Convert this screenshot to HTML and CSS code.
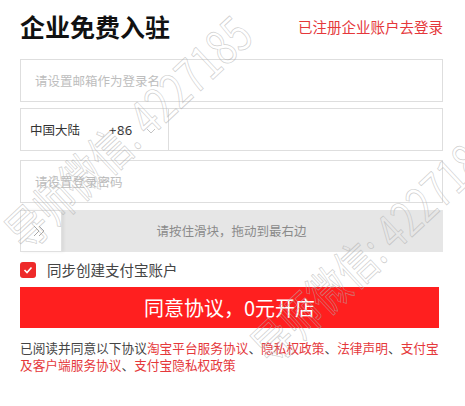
FILE: index.html
```html
<!DOCTYPE html>
<html lang="zh-CN">
<head>
<meta charset="utf-8">
<link rel="stylesheet" href="styles.css">
</head>
<body>
<div class="page">
  <header class="head">
    <h1 class="title">企业免费入驻</h1>
    <a class="login">已注册企业账户去登录</a>
  </header>

  <div class="field field-email"><span class="ph">请设置邮箱作为登录名</span></div>

  <div class="field field-phone">
    <div class="region">
      <span class="country">中国大陆</span>
      <span class="code">+86</span>
      <svg class="chev" width="10" height="6" viewBox="0 0 10 6"><path d="M1 1 L5 5 L9 1" fill="none" stroke="#c4c4c4" stroke-width="1"/></svg>
    </div>
    <div class="phone-input"></div>
  </div>

  <div class="field field-pwd"><span class="ph">请设置登录密码</span></div>

  <div class="slider">
    <span class="slider-text">请按住滑块，拖动到最右边</span>
    <div class="handle">
      <svg width="14" height="12" viewBox="0 0 14 12"><path d="M2 1 L7 6 L2 11 M7 1 L12 6 L7 11" fill="none" stroke="#a8a8a8" stroke-width="1"/></svg>
    </div>
  </div>

  <label class="agree">
    <span class="check"><svg width="10" height="8" viewBox="0 0 10 8"><path d="M1.5 4 L4 6.5 L8.5 1.5" fill="none" stroke="#fff" stroke-width="1.6"/></svg></span>
    <span class="agree-text">同步创建支付宝账户</span>
  </label>

  <button class="submit">同意协议，0元开店</button>

  <p class="terms">已阅读并同意以下协议<a class="link">淘宝平台服务协议</a>、<a class="link">隐私权政策</a>、<a class="link">法律声明</a>、<a class="link">支付宝及客户端服务协议</a>、<a class="link">支付宝隐私权政策</a></p>

  <div class="watermark">
    <span class="wm wm-1">导师微信: 4227185</span>
    <span class="wm wm-2">导师微信: 4227185</span>
  </div>
</div>
</body>
</html>
```

FILE: styles.css
```css
* { box-sizing: border-box; }
html, body { margin: 0; padding: 0; background: #fff; }
body {
  width: 465px;
  height: 406px;
  overflow: hidden;
  font-family: "Noto Sans CJK SC", "Noto Sans", "Liberation Sans", sans-serif;
  color: #333;
}
.page {
  position: relative;
  padding: 0 22px 0 20px;
  height: 406px;
  overflow: hidden;
}
.head {
  height: 52px;
  display: flex;
  align-items: center;
  justify-content: space-between;
  margin-bottom: 7px;
}
.title {
  margin: 0;
  font-size: 25px;
  font-weight: 700;
  line-height: 30px;
  color: #111;
}
.login {
  font-size: 14.5px;
  line-height: 20px;
  color: #e5383b;
  padding-top: 2px;
}
.field {
  height: 43px;
  border: 1px solid #dedede;
  display: flex;
  align-items: center;
}
.ph {
  padding-left: 14px;
  font-size: 12.5px;
  color: #bdbdbd;
  line-height: 16px;
}
.field-phone { margin-top: 6px; }
.region {
  width: 148px;
  height: 100%;
  border-right: 1px solid #dedede;
  display: flex;
  align-items: center;
  padding-left: 9px;
  font-size: 12.5px;
  color: #333;
}
.country { width: 79px; }
.code { font-family: "Noto Sans", "Liberation Sans", sans-serif; font-size: 13px; letter-spacing: 0.5px; }
.chev { margin-left: 13px; margin-top: 2px; }
.phone-input { flex: 1; }
.field-pwd { margin-top: 9px; }
.slider {
  margin-top: 7px;
  height: 42px;
  background: #e6e6e6;
  display: grid;
}
.slider > * { grid-area: 1 / 1; }
.slider-text {
  justify-self: center;
  align-self: center;
  font-size: 12.5px;
  color: #8a8a8a;
  line-height: 16px;
}
.handle {
  justify-self: start;
  width: 42px;
  height: 42px;
  background: #fff;
  border: 1px solid #e0e0e0;
  box-shadow: 2px 0 3px rgba(0,0,0,0.06);
  display: flex;
  align-items: center;
  justify-content: center;
  padding-right: 4px;
}
.agree {
  display: flex;
  align-items: center;
  height: 24px;
  margin-top: 6px;
}
.check {
  width: 16px;
  height: 16px;
  border-radius: 3px;
  background: #ee2a2a;
  display: flex;
  align-items: center;
  justify-content: center;
}
.agree-text {
  margin-left: 11px;
  font-size: 14.5px;
  color: #444;
  line-height: 18px;
}
.submit {
  display: flex;
  align-items: center;
  justify-content: center;
  margin-top: 5px;
  width: 419px;
  height: 41px;
  border: 0;
  background: #ff1f1f;
  color: #fff;
  font-family: "Noto Sans CJK SC", "Noto Sans", sans-serif;
  font-size: 20px;
  line-height: 24px;
  padding: 0;
}
.terms {
  margin: 11px 0 0;
  font-size: 12.7px;
  line-height: 17px;
  color: #444;
}
.link { color: #e5383b; }

.watermark {
  position: absolute;
  inset: 0;
  pointer-events: none;
}
.wm {
  position: absolute;
  white-space: nowrap;
  font-family: "Noto Sans CJK SC", "Liberation Sans", sans-serif;
  font-size: 48px;
  line-height: 48px;
  color: transparent;
  -webkit-text-stroke: 0.8px rgba(175,175,175,0.6);
  transform-origin: 0 50%;
  transform: rotate(-43deg) scaleX(0.78);
}
.wm-1 { left: 12px; top: 214px; }
.wm-2 { left: 258px; top: 328px; }
```
